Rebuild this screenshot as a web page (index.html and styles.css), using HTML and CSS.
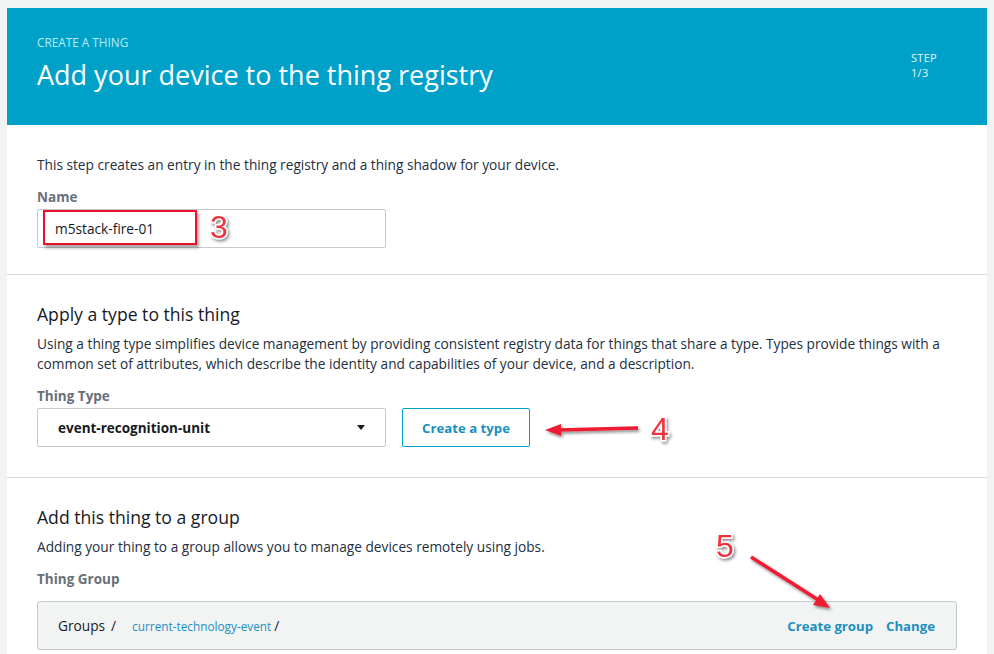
FILE: index.html
```html
<!DOCTYPE html>
<html lang="en">
<head>
  <meta charset="UTF-8">
  <meta name="viewport" content="width=device-width, initial-scale=1.0">
  <title>Create a thing</title>
  <link rel="stylesheet" href="styles.css">
</head>
<body>
  <div class="wizard">
    <!-- Header -->
    <div class="wizard-header">
      <div class="header-text">
        <div class="eyebrow">CREATE A THING</div>
        <h1>Add your device to the thing registry</h1>
      </div>
      <div class="step">
        <div>STEP</div>
        <div>1/3</div>
      </div>
    </div>

    <!-- Name -->
    <div class="section first">
      <p class="desc">This step creates an entry in the thing registry and a thing shadow for your device.</p>
      <label class="label">Name</label>
      <div class="field name-field">
        <span class="value">m5stack-fire-01</span>
        <span class="highlight"></span>
      </div>
    </div>

    <!-- Thing type -->
    <div class="section">
      <h2>Apply a type to this thing</h2>
      <p class="desc">Using a thing type simplifies device management by providing consistent registry data for things that share a type. Types provide things with a common set of attributes, which describe the identity and capabilities of your device, and a description.</p>
      <label class="label">Thing Type</label>
      <div class="row">
        <div class="field select">
          <span class="value strong">event-recognition-unit</span>
          <span class="caret"></span>
        </div>
        <button class="btn-outline">Create a type</button>
      </div>
    </div>

    <!-- Thing group -->
    <div class="section">
      <h2>Add this thing to a group</h2>
      <p class="desc">Adding your thing to a group allows you to manage devices remotely using jobs.</p>
      <label class="label">Thing Group</label>
      <div class="group-box">
        <div class="crumbs">
          <span>Groups</span><span class="slash">/</span>
          <a href="#" class="crumb-link">current-technology-event</a><span class="slash tight">/</span>
        </div>
        <div class="actions">
          <a href="#">Create group</a>
          <a href="#">Change</a>
        </div>
      </div>
    </div>
  </div>

  <!-- Screenshot annotations -->
  <svg class="annotations" width="994" height="654" viewBox="0 0 994 654">
    <defs>
      <filter id="shadow" x="-20%" y="-20%" width="140%" height="140%">
        <feDropShadow dx="1.5" dy="2" stdDeviation="1.5" flood-color="#000" flood-opacity="0.45"/>
      </filter>
    </defs>
    <g filter="url(#shadow)">
      <text class="mark" x="210" y="238">3</text>
      <text class="mark" x="651" y="440">4</text>
      <text class="mark" x="716" y="557">5</text>
      <line x1="638" y1="428" x2="558" y2="430" stroke="#ee1c30" stroke-width="3.5"/>
      <polygon points="545,430 561,424 561,436" fill="#ee1c30"/>
      <line x1="751" y1="557" x2="820" y2="601" stroke="#ee1c30" stroke-width="3.5"/>
      <polygon points="830,608 813,605 820,594" fill="#ee1c30"/>
    </g>
  </svg>
</body>
</html>
```

FILE: styles.css
```css
* {
  margin: 0;
  padding: 0;
  box-sizing: border-box;
}

body {
  font-family: "Open Sans", Arial, sans-serif;
  font-size: 13.7px;
  background: #f2f3f3;
  color: #16191f;
  padding: 8px 7px 0 7px;
  height: 654px;
  overflow: hidden;
  position: relative;
}

.wizard {
  width: 980px;
  background: #fff;
}

.wizard-header {
  background: #00a1c9;
  height: 117px;
  padding: 26px 49px 0 30px;
  display: flex;
  justify-content: space-between;
}

.eyebrow {
  font-size: 11.8px;
  line-height: 16px;
  color: #b8ecf7;
}

h1 {
  font-size: 27px;
  font-weight: normal;
  line-height: 32px;
  color: #fff;
  margin-top: 9px;
}

.step {
  font-size: 11px;
  line-height: 15px;
  letter-spacing: 0.3px;
  color: #e6f7fb;
  padding-top: 16px;
  width: 27px;
}

.section {
  padding: 27px 30px 30px 30px;
  border-top: 1px solid #d5dbdb;
}

.section.first {
  border-top: none;
  padding-top: 30px;
  padding-bottom: 26px;
}

h2 {
  font-size: 17.6px;
  font-weight: normal;
  line-height: 24px;
  margin-bottom: 8px;
}

.desc {
  line-height: 20px;
  color: #232f3e;
}

.label {
  display: block;
  font-size: 13.5px;
  font-weight: bold;
  color: #687078;
  line-height: 20px;
  margin-top: 12px;
  margin-bottom: 2px;
}

.field {
  width: 349px;
  height: 39px;
  border: 1px solid #c6cbcd;
  border-radius: 2px;
  display: flex;
  align-items: center;
  padding: 0 17px;
  position: relative;
}

.name-field .value {
  color: #16191f;
}

.highlight {
  position: absolute;
  left: 5px;
  top: 0;
  width: 154px;
  height: 35px;
  border: 2px solid #e8112d;
  box-shadow: 2px 3px 3px rgba(0, 0, 0, 0.35);
}

.value.strong {
  font-size: 13.5px;
  font-weight: bold;
  padding-left: 3px;
}

.row {
  display: flex;
  gap: 16px;
}

.select {
  justify-content: space-between;
}

.caret {
  width: 0;
  height: 0;
  border-left: 4.5px solid transparent;
  border-right: 4.5px solid transparent;
  border-top: 5px solid #16191f;
  margin-right: 3px;
}

.btn-outline {
  width: 128px;
  height: 39px;
  background: #fff;
  border: 1px solid #00a1c9;
  border-radius: 2px;
  color: #1a8fc2;
  font-family: inherit;
  font-size: 13.2px;
  font-weight: bold;
}

.group-box {
  height: 49px;
  margin-top: 12px;
  background: #f2f3f3;
  border: 1px solid #c6cbcd;
  border-radius: 3px;
  display: flex;
  justify-content: space-between;
  align-items: center;
  padding: 0 21px 0 20px;
}

.crumbs {
  display: flex;
  align-items: center;
  color: #16191f;
}

.slash {
  margin: 0 16px 0 6px;
}

.slash.tight {
  margin: 0 0 0 3px;
}

.crumb-link {
  font-size: 11.8px;
  color: #1a8fc2;
  text-decoration: none;
}

.actions {
  display: flex;
  gap: 13px;
}

.actions a {
  font-size: 13.2px;
  font-weight: bold;
  color: #1a8fc2;
  text-decoration: none;
}

.annotations {
  position: absolute;
  left: 0;
  top: 0;
  pointer-events: none;
}

.mark {
  font-family: "Liberation Sans", Arial, sans-serif;
  font-size: 32px;
  fill: #ef3340;
  stroke: #fff;
  stroke-width: 3px;
  paint-order: stroke;
}
```
